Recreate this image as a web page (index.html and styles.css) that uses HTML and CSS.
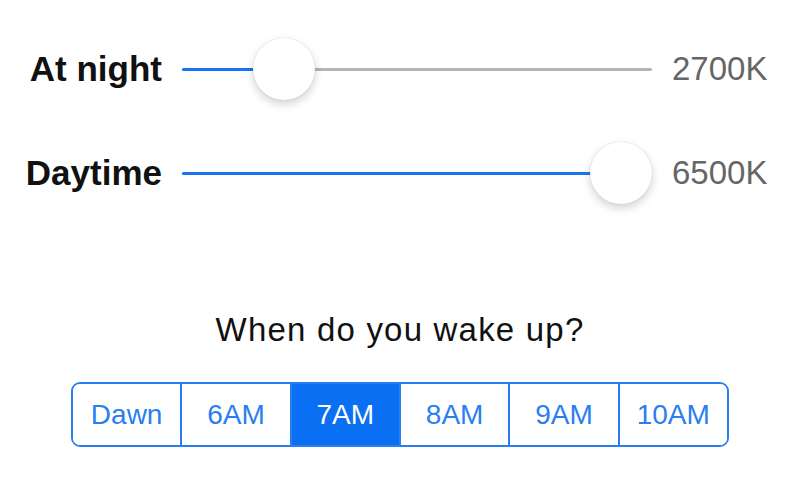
FILE: index.html
```html
<!DOCTYPE html>
<html lang="en">
  <head>
    <meta charset="UTF-8" />
    <title>Color Temperature</title>
    <link rel="stylesheet" href="styles.css">
  </head>
  <body>
    <div class="sliders">
      <div class="slider-row">
        <div class="label">At night</div>
        <div class="track" style="--pos: 0.174">
          <div class="fill"></div>
          <div class="thumb"></div>
        </div>
        <div class="value">2700K</div>
      </div>
      <div class="slider-row">
        <div class="label">Daytime</div>
        <div class="track" style="--pos: 1">
          <div class="fill"></div>
          <div class="thumb"></div>
        </div>
        <div class="value">6500K</div>
      </div>
    </div>

    <!-- Wake up time -->
    <div class="wake">
      <div class="question">When do you wake up?</div>
      <div class="segments">
        <button>Dawn</button>
        <button>6AM</button>
        <button class="active">7AM</button>
        <button>8AM</button>
        <button>9AM</button>
        <button>10AM</button>
      </div>
    </div>
  </body>
</html>
```

FILE: styles.css
```css
body {
  margin: 0;
  font-family: "Liberation Sans", Arial, sans-serif;
  background-color: #ffffff;
  color: #111;
}

.sliders {
  display: flex;
  flex-direction: column;
  gap: 42px;
  padding-top: 38px;
}

.slider-row {
  display: grid;
  grid-template-columns: 162px 470px auto;
  column-gap: 20px;
  align-items: center;
  height: 62px;
}

.label {
  text-align: right;
  font-size: 35px;
  font-weight: bold;
}

.track {
  position: relative;
  height: 3px;
  background-color: #b5b5b5;
  border-radius: 2px;
}

.fill {
  width: calc(var(--pos) * (100% - 62px) + 31px);
  height: 100%;
  background-color: #1a73f0;
  border-radius: 2px;
}

.thumb {
  position: absolute;
  top: -30px;
  left: calc(var(--pos) * (100% - 62px));
  width: 62px;
  height: 62px;
  border-radius: 50%;
  background-color: white;
  box-shadow: 0 4px 10px rgba(0, 0, 0, 0.18), 0 0 1px rgba(0, 0, 0, 0.2);
}

.value {
  font-size: 33px;
  color: #666;
}

.wake {
  display: flex;
  flex-direction: column;
  align-items: center;
  padding-top: 107px;
}

.question {
  font-size: 33px;
  letter-spacing: 1.2px;
  color: #111;
}

.segments {
  display: flex;
  margin-top: 33px;
  width: 658px;
  height: 65px;
  border: 2px solid #2a7ef2;
  border-radius: 9px;
  overflow: hidden;
  box-sizing: border-box;
}

.segments button {
  flex: 1;
  border: none;
  border-left: 2px solid #2a7ef2;
  background-color: white;
  color: #2a7ef2;
  font-family: "Liberation Sans", Arial, sans-serif;
  font-size: 28px;
  padding: 0;
}

.segments button:first-child {
  border-left: none;
}

.segments button.active {
  background-color: #0a6ff2;
  color: white;
}
```
